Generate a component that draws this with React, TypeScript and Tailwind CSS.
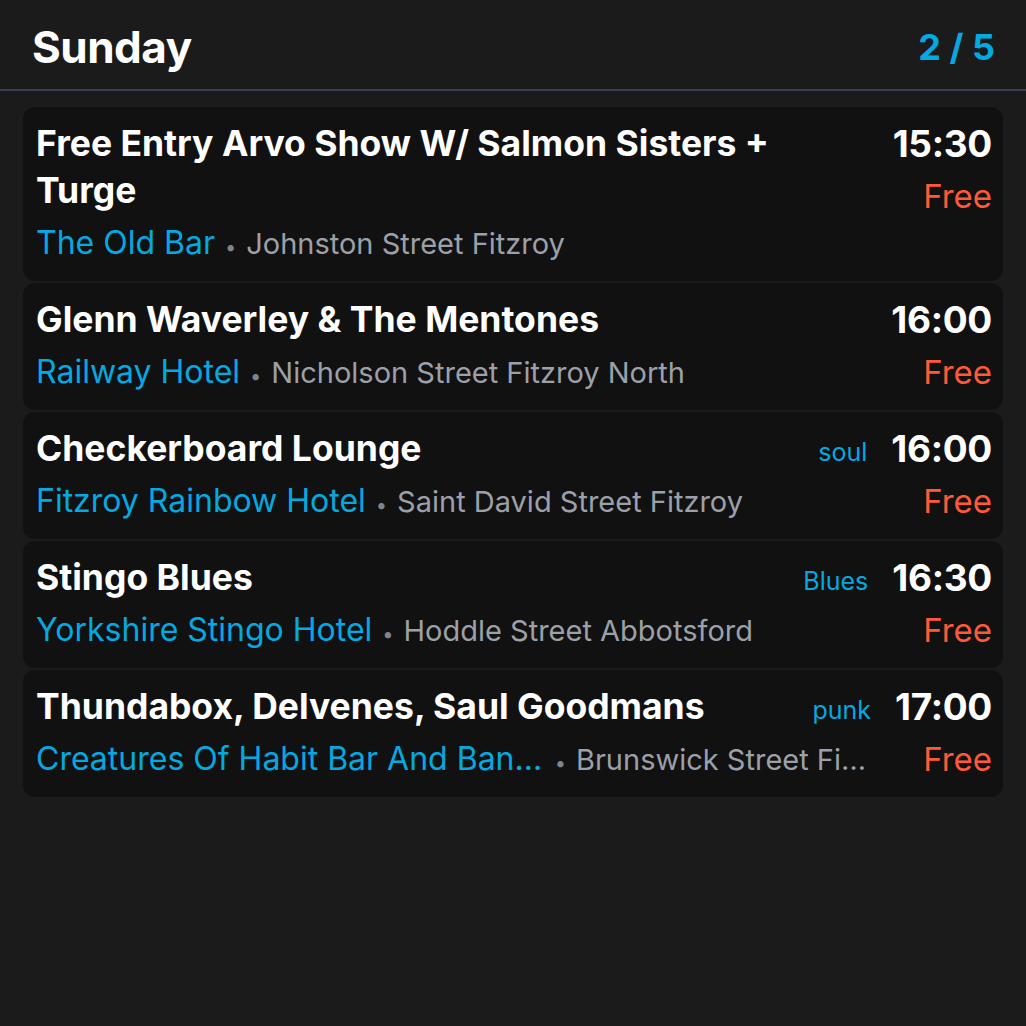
import React from "react";

type Ev = { title: string; venue: string; addr: string; time: string; genre?: string; price: string };

const events: Ev[] = [
  { title: "Free Entry Arvo Show W/ Salmon Sisters + Turge", venue: "The Old Bar", addr: "Johnston Street Fitzroy", time: "15:30", price: "Free" },
  { title: "Glenn Waverley & The Mentones", venue: "Railway Hotel", addr: "Nicholson Street Fitzroy North", time: "16:00", price: "Free" },
  { title: "Checkerboard Lounge", venue: "Fitzroy Rainbow Hotel", addr: "Saint David Street Fitzroy", time: "16:00", genre: "soul", price: "Free" },
  { title: "Stingo Blues", venue: "Yorkshire Stingo Hotel", addr: "Hoddle Street Abbotsford", time: "16:30", genre: "Blues", price: "Free" },
  { title: "Thundabox, Delvenes, Saul Goodmans", venue: "Creatures Of Habit Bar And Bandroom", addr: "Brunswick Street Fitzroy", time: "17:00", genre: "punk", price: "Free" },
];

export default function App() {
  return (
    <div className="w-[1026px] h-[1026px] bg-[#1b1b1b] text-white overflow-hidden" style={{ fontFamily: "Inter, 'Noto Sans', sans-serif" }}>
      <div className="h-[91px] flex items-center justify-between pl-8 pr-[31px] pt-[5px] border-b-2 border-[#3a4150]">
        <div className="text-[44px] font-bold tracking-[-0.5px]">Sunday</div>
        <div className="text-[36px] font-bold text-[#03a9e0]">2 / 5</div>
      </div>
      <div className="flex flex-col gap-[2px] px-[23px] pt-4">
        {events.map((e, i) => (
          <div key={i} className="flex rounded-xl bg-[#111111] pl-[13px] pr-[11px] pt-[13px] pb-[14px]">
            <div className="flex-1 min-w-0">
              <div className="flex items-baseline gap-4">
                <div className="flex-1 min-w-0 pr-2 text-[35.5px] font-bold leading-[47px]">{e.title}</div>
                {e.genre && <div className="text-[25px] text-[#03a9e0] shrink-0">{e.genre}</div>}
              </div>
              <div className="flex items-baseline mt-[9px] leading-[40px] whitespace-nowrap">
                <span className="text-[32px] text-[#03a9e0] truncate min-w-0">{e.venue}</span>
                <span className="text-[#80848c] text-[20px] mx-[10px] shrink-0">•</span>
                <span className="text-[29px] text-[#9ca0a8] truncate min-w-0">{e.addr}</span>
              </div>
            </div>
            <div className="flex flex-col items-end ml-6 shrink-0">
              <div className="text-[37px] font-bold leading-[47px] tracking-[-0.3px]">{e.time}</div>
              <div className="text-[33px] text-[#ff5a36] leading-[40px] mt-[9px]">{e.price}</div>
            </div>
          </div>
        ))}
      </div>
    </div>
  );
}
